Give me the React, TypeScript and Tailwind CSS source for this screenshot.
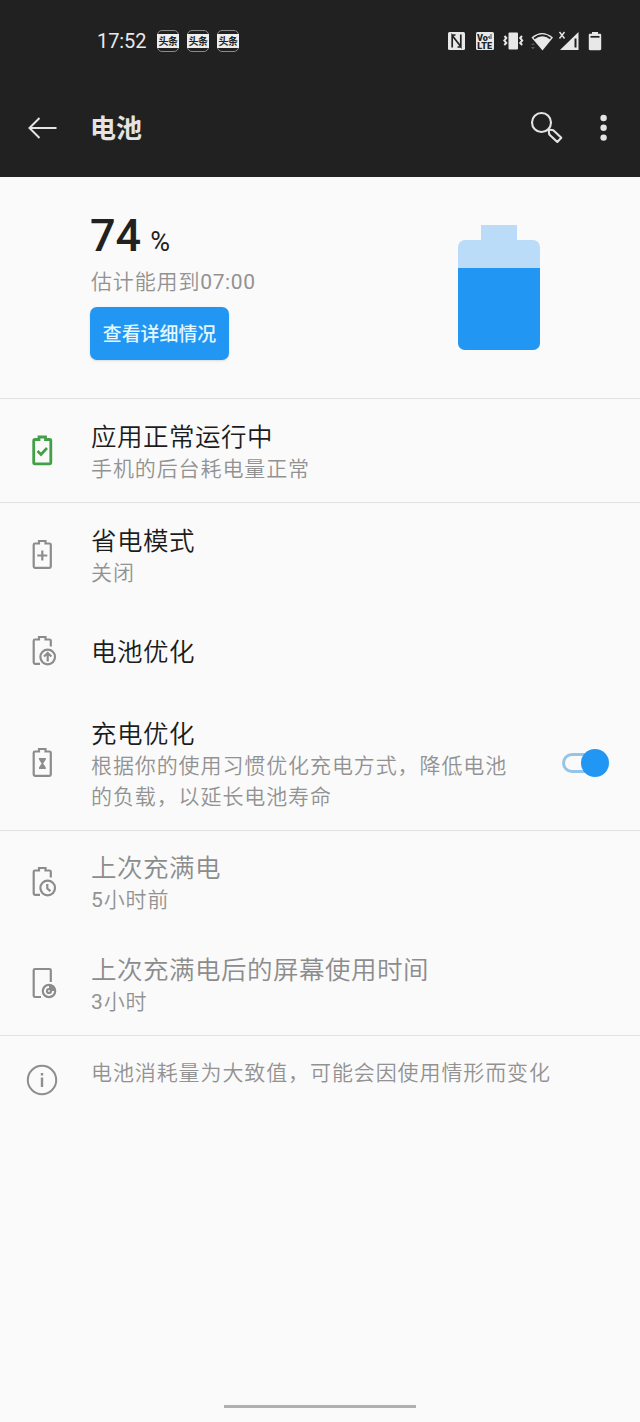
import type { ReactNode } from 'react';

const battery = 'M8 6.500h4V4h6.500v2.500h4c.8 0 1.300.5 1.300 1.300V29.500c0 .8-.5 1.300-1.300 1.300H8c-.8 0-1.300-.5-1.300-1.300V7.800c0-.8.5-1.300 1.300-1.300z';
const batteryOpen = 'M13 30.800H8c-.8 0-1.300-.5-1.300-1.300V7.800c0-.8.5-1.300 1.300-1.300h4V4h6.500v2.500h4c.8 0 1.300.5 1.300 1.300V13.500';

function RowIcon({ className = 'text-[#8c8c8c]', children }: { className?: string; children: ReactNode }) {
  return (
    <svg
      className={`mb-[2px] h-[34px] w-[30px] ${className}`}
      viewBox="0 0 30 34"
      fill="none"
      stroke="currentColor"
      strokeWidth="2.200"
    >
      {children}
    </svg>
  );
}

function AppsOkIcon() {
  return (
    <RowIcon className="text-[#43a047]">
      <path d={battery} strokeWidth="2.800" />
      <path d="M10.500 18l3.500 3.500 6-6.500" strokeWidth="2.600" />
    </RowIcon>
  );
}

function SaverIcon() {
  return (
    <RowIcon>
      <path d={battery} />
      <path d="M15.300 13.500v10M10.300 18.500h10" />
    </RowIcon>
  );
}

function OptimizeIcon() {
  return (
    <RowIcon>
      <path d={batteryOpen} />
      <circle cx="20.700" cy="24" r="7.300" />
      <path d="M20.700 28.500v-8M17 23.500l3.700-3.500 3.700 3.500" />
    </RowIcon>
  );
}

function ChargingIcon() {
  return (
    <RowIcon>
      <path d={battery} />
      <path d="M12 13h6.800v1.500l-2.600 4 2.600 4V24H12v-1.500l2.600-4-2.600-4z" fill="currentColor" stroke="none" />
    </RowIcon>
  );
}

function LastFullIcon() {
  return (
    <RowIcon>
      <path d={batteryOpen} />
      <circle cx="20.700" cy="24" r="7.300" />
      <path d="M20.300 20v4.500l3.200 2.700" />
    </RowIcon>
  );
}

function ScreenTimeIcon() {
  return (
    <RowIcon>
      <path d="M14 31H8c-.8 0-1.300-.5-1.300-1.300V4.300C6.700 3.500 7.200 3 8 3h14.500c.8 0 1.300.5 1.300 1.300V16" />
      <circle cx="22" cy="25" r="6.200" />
      <circle cx="22" cy="25" r="2" />
      <path d="M22 19v4.500a2 2 0 0 1 2 1.500h4.500a6.500 6.500 0 0 0-6.500-6z" fill="currentColor" stroke="none" />
    </RowIcon>
  );
}

function StatusBar() {
  return (
    <div className="flex h-[82px] items-center justify-between pr-[38px] pl-[97px] text-[#e8e8e8]">
      <div className="flex items-center">
        <span className="w-[60px] text-[20px] tracking-[-0.1px]">17:52</span>
        <div className="flex gap-[8px]">
          {[0, 1, 2].map((i) => (
            <div key={i} className="flex h-[22px] w-[22px] items-center rounded-[5px] border border-[#8a8a8a]">
              <span className="-mx-px h-[14px] w-[22px] shrink-0 bg-[#eee] text-center text-[10px] leading-[15px] font-bold tracking-[-0.5px] text-[#222]">
                头条
              </span>
            </div>
          ))}
        </div>
      </div>
      <svg className="h-[24px] w-[155px]" viewBox="0 0 155 24" fill="currentColor">
        <rect x="1" y="3" width="17" height="18" rx="1.500" />
        <path d="M5.200 18.500V6.500l8.600 11V5.500M4.500 6h4M14.500 18h-4" fill="none" stroke="#212121" strokeWidth="1.700" />
        <rect x="29" y="3" width="18" height="18" rx="1.500" />
        <text x="30" y="11.500" fontSize="9" fontWeight="900" fill="#212121">Vo</text>
        <path d="M41 9c1.500-4 2 0 1.500 1M44 5v5" fill="none" stroke="#212121" strokeWidth=".8" />
        <text x="30.300" y="19.700" fontSize="9" fontWeight="900" fill="#212121">LTE</text>
        <rect x="61.500" y="3.500" width="9.500" height="17" rx="1" />
        <path d="M57.500 7l1.800 2-2 2.500 2 2.500-2 2M75 7l-1.800 2 2 2.500-2 2.500 2 2" fill="none" stroke="currentColor" strokeWidth="2" />
        <path d="M84.500 8.500Q95 -.5 106 8.500L95.500 21.500z" />
        <path d="M87 9.500q8.500-6.500 16.500 0" fill="none" stroke="#212121" strokeWidth="1.800" />
        <path d="M86 14l2 2h-4zM84 18h4l-2 2.500z" fill="#555" />
        <path d="M112.500 3l5 6.500M117.500 3l-5 6.500" fill="none" stroke="currentColor" strokeWidth="1.400" />
        <path d="M131.500 3v18h-18.500z" />
        <path d="M128.500 9.500V18.500" stroke="#212121" strokeWidth="2" />
        <path d="M145 3h6v1.800h2c.7 0 1.200.5 1.200 1.200v14c0 .7-.5 1.200-1.200 1.200h-10c-.7 0-1.200-.5-1.200-1.200V6c0-.7.5-1.200 1.200-1.200h2z" />
        <path d="M143.500 7.800h9" stroke="#212121" strokeWidth="1.700" />
      </svg>
    </div>
  );
}

function AppBar() {
  return (
    <div className="flex h-[95px] items-center pr-[32px] pl-[28px] text-[#e4e4e4]">
      <svg className="mb-[4px] h-[24px] w-[30px]" viewBox="0 0 30 24" fill="none" stroke="currentColor" strokeWidth="2">
        <path d="M1.500 12h27M11.500 2L1.500 12l10 10" />
      </svg>
      <h1 className="mb-px ml-[32px] flex-1 text-[26px] font-bold">电池</h1>
      <svg className="mb-[4px] h-[34px] w-[34px]" viewBox="0 0 34 34" fill="none" stroke="currentColor" strokeWidth="2.100">
        <circle cx="11.500" cy="11.500" r="9.500" />
        <path d="M18.500 18.500l.8 5 8 7.500 4-4.300-8-7.500z" strokeLinejoin="round" />
      </svg>
      <svg className="mb-[4px] ml-[36px] h-[28px] w-[8px]" viewBox="0 0 8 28" fill="currentColor">
        <circle cx="3.600" cy="4" r="3.200" />
        <circle cx="3.600" cy="13.800" r="3.200" />
        <circle cx="3.600" cy="23.600" r="3.200" />
      </svg>
    </div>
  );
}

function Summary() {
  return (
    <section className="flex h-[222px] border-b border-[#e2e2e2] pl-[90px]">
      <div className="w-[368px] pt-[32px]">
        <div className="flex items-baseline text-[#212121]">
          <span className="text-[45px] leading-[54px] font-medium">74</span>
          <span className="ml-[9px] text-[27px] font-normal">%</span>
        </div>
        <p className="pl-px text-[21px] leading-[38px] font-[350] tracking-[0.85px] text-[#929292]">
          估计能用到<span className="font-normal tracking-[0.6px]">07:00</span>
        </p>
        <button className="mt-[6px] block h-[53px] w-[139px] rounded-[7px] bg-[#2196f3] pt-[4px] text-[18.900px] font-medium text-[#e3f7ff] shadow-sm">
          查看详细情况
        </button>
      </div>
      <div className="flex flex-col items-center pt-[48px]">
        <div className="h-[15px] w-[36px] bg-[#bbdcf8]" />
        <div className="h-[110px] w-[82px] overflow-hidden rounded-[7px] bg-[#bbdcf8] pt-[28px]">
          <div className="h-full bg-[#2196f3]" />
        </div>
      </div>
    </section>
  );
}

type RowProps = {
  icon: ReactNode;
  title: string;
  summary?: ReactNode;
  className: string;
  muted?: boolean;
  children?: ReactNode;
};

function Row({ icon, title, summary, className, muted, children }: RowProps) {
  return (
    <div className={`flex items-center pl-[27px] ${className}`}>
      {icon}
      <div className={`ml-[34px] flex-1 ${summary ? 'pt-[4px]' : 'pt-[2px]'}`}>
        <h2 className={`text-[25.500px] leading-[33px] font-[350] tracking-[0.5px] ${muted ? 'text-[#8c8c8c]' : 'text-[#1c1c1c]'}`}>
          {title}
        </h2>
        {summary && (
          <p className="text-[21px] leading-[31px] font-[350] tracking-[0.9px] text-[#929292]">{summary}</p>
        )}
      </div>
      {children}
    </div>
  );
}

function Toggle() {
  return (
    <div className="mr-[31px] flex h-[28px] w-[47px] items-center">
      <div className="h-[20px] w-[28px] rounded-l-full border-[3px] border-r-0 border-[#94c5e8]" />
      <div className="-ml-[9px] h-[28px] w-[28px] shrink-0 rounded-full bg-[#2196f3]" />
    </div>
  );
}

export default function App() {
  return (
    <div className="flex h-[1422px] w-[640px] flex-col bg-[#fafafa] font-[Roboto,'Noto_Sans_CJK_SC',sans-serif]">
      <header className="bg-[#212121]">
        <StatusBar />
        <AppBar />
      </header>

      <Summary />

      <section className="border-b border-[#e2e2e2]">
        <Row icon={<AppsOkIcon />} title="应用正常运行中" summary="手机的后台耗电量正常" className="h-[103px]" />
      </section>

      <section className="border-b border-[#e2e2e2]">
        <Row icon={<SaverIcon />} title="省电模式" summary="关闭" className="h-[103px]" />
        <Row icon={<OptimizeIcon />} title="电池优化" className="h-[90px]" />
        <Row
          icon={<ChargingIcon />}
          title="充电优化"
          summary={
            <>
              根据你的使用习惯优化充电方式，降低电池
              <br />
              的负载，以延长电池寿命
            </>
          }
          className="h-[134px]"
        >
          <Toggle />
        </Row>
      </section>

      <section className="border-b border-[#e2e2e2]">
        <Row
          icon={<LastFullIcon />}
          title="上次充满电"
          summary={<><span className="font-normal">5</span>小时前</>}
          className="h-[102px]"
          muted
        />
        <Row
          icon={<ScreenTimeIcon />}
          title="上次充满电后的屏幕使用时间"
          summary={<><span className="font-normal">3</span>小时</>}
          className="h-[102px]"
          muted
        />
      </section>

      <div className="flex pt-[28px] pl-[26px]">
        <svg className="h-[32px] w-[32px] text-[#8e8e8e]" viewBox="0 0 32 32" fill="none" stroke="currentColor" strokeWidth="2">
          <circle cx="16" cy="16" r="14.200" />
          <path d="M16 13.500v9.500M16 9v2.500" strokeWidth="2.400" />
        </svg>
        <p className="ml-[33px] text-[21px] leading-[18px] font-[350] tracking-[0.9px] text-[#929292]">
          电池消耗量为大致值，可能会因使用情形而变化
        </p>
      </div>

      <div className="mx-auto mt-auto mb-[14px] h-[3px] w-[192px] bg-[#b0b0b0]" />
    </div>
  );
}
